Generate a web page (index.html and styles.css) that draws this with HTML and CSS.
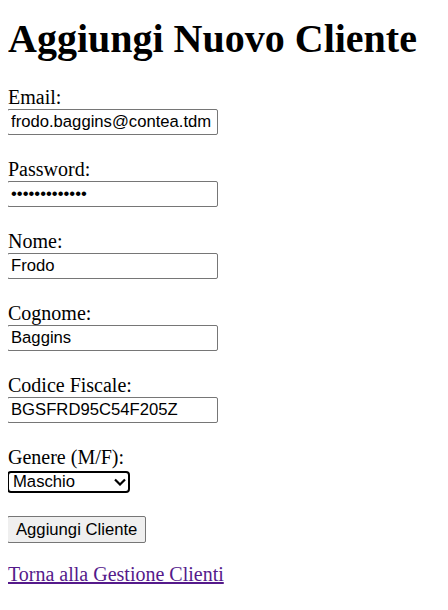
FILE: index.html
```html
<!DOCTYPE html>
<html lang="it">
<head>
<meta charset="utf-8">
<title>Aggiungi Nuovo Cliente</title>
<link rel="stylesheet" href="styles.css">
</head>
<body>
<h1 class="title">Aggiungi Nuovo Cliente</h1>
<form class="form">
<label class="label" for="email">Email:</label><br>
<input class="field" type="email" id="email" value="frodo.baggins@contea.tdm"><br><br>
<label class="label" for="pw">Password:</label><br>
<input class="field" type="password" id="pw" value="frodobaggins1"><br><br>
<label class="label" for="nome">Nome:</label><br>
<input class="field" type="text" id="nome" value="Frodo"><br><br>
<label class="label" for="cognome">Cognome:</label><br>
<input class="field" type="text" id="cognome" value="Baggins"><br><br>
<label class="label" for="cf">Codice Fiscale:</label><br>
<input class="field" type="text" id="cf" value="BGSFRD95C54F205Z"><br><br>
<label class="label" for="genere">Genere (M/F):</label><br>
<span class="select-wrap"><select class="select" id="genere"><option>Maschio</option><option>Femmina</option></select><svg class="chev" width="12" height="8" viewBox="0 0 12 8"><path d="M1 1.5 L6 6.5 L11 1.5" fill="none" stroke="#000" stroke-width="2.2"/></svg></span><br><br>
<button class="btn" type="button">Aggiungi Cliente</button>
</form>
<p class="back"><a class="link" href="#">Torna alla Gestione Clienti</a></p>
</body>
</html>
```
FILE: styles.css
```css
body {
  margin: 0 8px 8px;
  font-family: "Liberation Serif", "Times New Roman", serif;
  font-size: 20px;
  color: #000;
  background: #fff;
}
.title {
  font-size: 40px;
  font-weight: bold;
  margin: 15px 0 24px;
}
.form {
  margin: 0;
}
.field, .select, .btn {
  font-family: "Liberation Sans", Arial, sans-serif;
  font-size: 16.67px;
  color: #000;
}
.field {
  box-sizing: border-box;
  width: 211px;
  height: 26px;
  margin: 0 0 0 -1px;
  padding: 0 3px;
  border: 1px solid #767676;
  border-radius: 2px;
  background: #fff;
}
.select-wrap {
  display: inline-grid;
  vertical-align: baseline;
  margin-left: -1px;
}
.select {
  grid-area: 1 / 1;
  -webkit-appearance: none;
  appearance: none;
  box-sizing: border-box;
  width: 123px;
  height: 22px;
  margin: 0;
  padding: 0 0 0 4px;
  border: 2px solid #000;
  border-radius: 4px;
  background: #fff;
  line-height: 18px;
}
.chev {
  grid-area: 1 / 1;
  justify-self: end;
  align-self: center;
  margin-right: 4px;
  pointer-events: none;
}
.btn {
  box-sizing: border-box;
  height: 27px;
  margin: 0 0 0 -1px;
  padding: 0 8px;
  border: 1px solid #767676;
  border-radius: 2px;
  background: #efefef;
}
.back {
  margin: 20px 0;
}
.link {
  color: #551a8b;
}
```
